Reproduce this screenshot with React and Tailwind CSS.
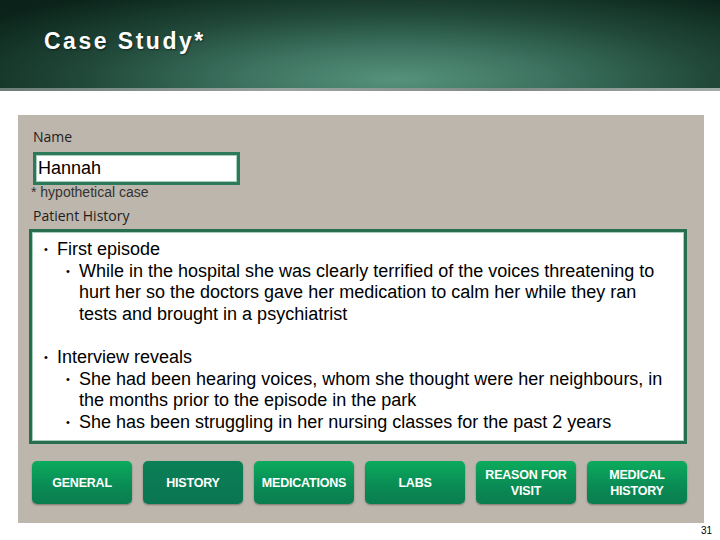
export default function App() {
  const tabs = [
    { label: 'GENERAL' },
    { label: 'HISTORY', active: true },
    { label: 'MEDICATIONS' },
    { label: 'LABS' },
    { label: 'REASON FOR\nVISIT' },
    { label: 'MEDICAL\nHISTORY' },
  ]

  return (
    <div className="w-[720px] h-[540px] bg-white overflow-hidden font-['Liberation_Sans',Arial,sans-serif]">
      {/* header band */}
      <div className="h-[88px] bg-[radial-gradient(ellipse_70%_120%_at_55%_90%,#55927c_0%,#3d7360_30%,#21493a_62%,#0a2219_100%)] pt-[28px] pl-[44px]">
        <h1 className="text-white font-bold text-[23px] leading-[26px] tracking-[2.5px] [text-shadow:1px_1px_2px_rgba(0,0,0,0.5)]">
          Case Study*
        </h1>
      </div>
      <div className="h-[3px] bg-[linear-gradient(90deg,#6f7d76,#9aa59f_40%,#7d8983_70%,#a3aca7)]" />

      {/* grey panel */}
      <div className="mt-[24px] ml-[18px] w-[686px] h-[408px] bg-[#bdb6ac] pt-[14px] px-[15px]">
        <div className="text-[14px] leading-[16px] text-[#1d1d1d] font-['Open_Sans',sans-serif]">Name</div>
        <div className="mt-[7px] w-[207px] h-[33px] bg-white border-[3px] border-[#2d7a5a] shadow-[inset_0_0_0_1px_#a9cdbb] flex items-center pl-[2px]">
          <span className="text-[18px] text-black">Hannah</span>
        </div>
        <div className="-ml-[2px] text-[14px] leading-[14px] text-[#333]">* hypothetical case</div>
        <div className="mt-[9px] text-[14px] leading-[16px] text-[#1d1d1d] font-['Open_Sans',sans-serif]">Patient History</div>

        <div className="mt-[5px] -ml-[4px] w-[658px] h-[215px] bg-white border-[3px] border-[#276e51] shadow-[inset_0_0_0_1px_#a9cdbb] pt-[7px] pl-[12px] pr-[12px] text-[18px] leading-[21.6px] text-black">
          <Bullet>First episode</Bullet>
          <Bullet sub>
            While in the hospital she was clearly terrified of the voices threatening to hurt her so the doctors gave her medication to calm her while they ran tests and brought in a psychiatrist
          </Bullet>
          <div className="h-[21.6px]" />
          <Bullet>Interview reveals</Bullet>
          <Bullet sub>
            She had been hearing voices, whom she thought were her neighbours, in the months prior to the episode in the park
          </Bullet>
          <Bullet sub>She has been struggling in her nursing classes for the past 2 years</Bullet>
        </div>

        <div className="mt-[17px] -ml-[1px] flex gap-[11px]">
          {tabs.map((t) => (
            <div
              key={t.label}
              className={
                'w-[100px] h-[43px] rounded-[5px] flex items-center justify-center text-center whitespace-pre-line text-white font-bold text-[12.5px] leading-[16px] tracking-[-0.2px] shadow-[0_1px_2px_rgba(0,0,0,0.35)] ' +
                (t.active
                  ? 'bg-[linear-gradient(180deg,#0b7f57,#0a7651)]'
                  : 'bg-[linear-gradient(180deg,#0bab5d,#0a8a54_60%,#0a7d4f)]')
              }
            >
              {t.label}
            </div>
          ))}
        </div>
      </div>

      <div className="w-[712px] text-right text-[10px] leading-[12px] mt-[2px] text-black">31</div>
    </div>
  )
}

function Bullet({ sub, children }) {
  return (
    <div className={'flex ' + (sub ? 'pl-[22px]' : '')}>
      <span className="w-[13px] shrink-0 text-[11px]">•</span>
      <span className="flex-1">{children}</span>
    </div>
  )
}
